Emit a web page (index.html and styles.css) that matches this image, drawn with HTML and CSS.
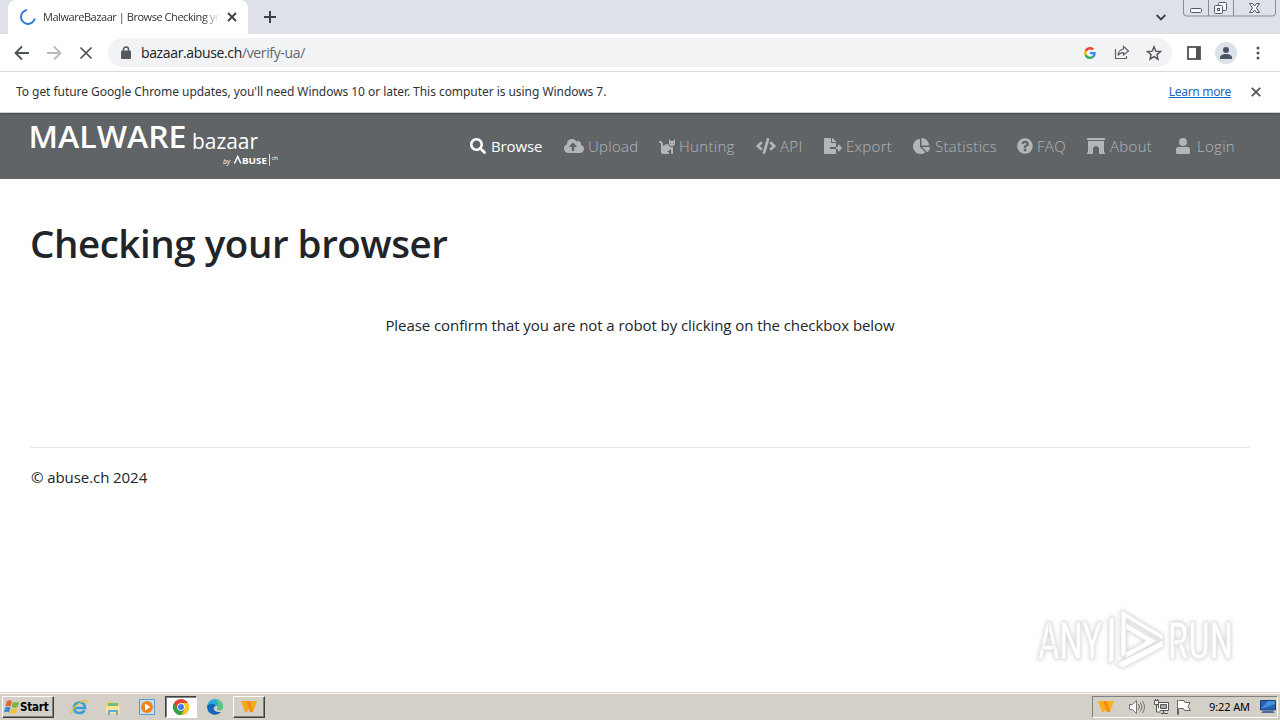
FILE: index.html
```
<!DOCTYPE html>
<html lang="en">
<head>
    <meta charset="UTF-8">
    <meta name="viewport" content="width=device-width, initial-scale=1.0">
    <title>MalwareBazaar | Browse Checking your browser</title>
    <link rel="stylesheet" href="styles.css">
</head>
<body>
    <div class="tabstrip">
        <div class="tab">
            <svg class="spinner" width="18" height="18" viewBox="0 0 18 18"><path d="M8 2A7 7 0 1 0 15.8 10.5" fill="none" stroke="#3b78d0" stroke-width="2"/></svg>
            <span class="tab-title">MalwareBazaar | Browse Checking your</span>
            <svg width="10" height="10" viewBox="0 0 10 10"><path d="M1 1l8 8M9 1L1 9" stroke="#3c4043" stroke-width="1.8"/></svg>
        </div>
        <svg class="new-tab" width="12" height="12" viewBox="0 0 12 12"><path d="M6 0v12M0 6h12" stroke="#3c4043" stroke-width="2"/></svg>
        <svg class="tab-search" width="10" height="7" viewBox="0 0 10 7"><path d="M.7 1L5 5.3 9.3 1" fill="none" stroke="#3c4043" stroke-width="1.9"/></svg>
        <svg class="controls" width="94" height="18" viewBox="0 0 94 18">
            <path d="M.5 0v13q0 3 3 3h86q3 0 3-3V0M25.500 0v16M50.500 0v16" fill="none" stroke="#868b95"/>
            <g fill="#f4f5f8" stroke="#555b66">
                <rect x="7.500" y="8.500" width="11" height="4" rx="1"/>
                <rect x="35.500" y="2.500" width="8" height="8" rx="1"/>
                <rect x="31.500" y="5.500" width="8" height="8" rx="1"/>
                <rect x="34.500" y="8.500" width="2" height="2"/>
                <path d="M66.500 3.500h3l2 2.500 2-2.500h3l-3 4.500 3 4.500h-3l-2-2.500-2 2.500h-3l3-4.500z"/>
            </g>
        </svg>
    </div>
    <div class="toolbar">
        <svg width="16" height="16" viewBox="0 0 16 16"><path d="M15 8H2M8 1.500L1.500 8 8 14.500" fill="none" stroke="#4f5357" stroke-width="1.800"/></svg>
        <svg width="16" height="16" viewBox="0 0 16 16"><path d="M1 8h13M8 1.500L14.500 8 8 14.500" fill="none" stroke="#b8babd" stroke-width="1.800"/></svg>
        <svg width="16" height="16" viewBox="0 0 16 16"><path d="M2.500 2.500l11 11M13.500 2.500l-11 11" stroke="#4f5357" stroke-width="1.700"/></svg>
        <div class="omnibox">
            <svg width="10" height="13" viewBox="0 0 10 13"><rect y="4.500" width="10" height="8.500" rx="1" fill="#55595d"/><path d="M2.500 5V3.500a2.500 2.500 0 0 1 5 0V5" fill="none" stroke="#55595d" stroke-width="1.500"/></svg>
            <span class="url">bazaar.abuse.ch<span class="path">/verify-ua/</span></span>
            <svg class="google" width="12" height="12" viewBox="0 0 48 48"><path fill="#ea4335" d="M24 9.500c3.540 0 6.710 1.220 9.210 3.600l6.850-6.850C35.900 2.380 30.470 0 24 0 14.620 0 6.510 5.380 2.560 13.220l7.980 6.190C12.430 13.720 17.740 9.500 24 9.500z"/><path fill="#4285f4" d="M46.980 24.550c0-1.570-.15-3.090-.38-4.550H24v9.020h12.940c-.58 2.960-2.260 5.480-4.780 7.180l7.730 6c4.510-4.180 7.090-10.360 7.090-17.650z"/><path fill="#fbbc05" d="M10.530 28.590A14.500 14.500 0 0 1 9.770 24c0-1.600.27-3.140.76-4.590l-7.980-6.190A23.900 23.900 0 0 0 0 24c0 3.880.92 7.540 2.560 10.780z"/><path fill="#34a853" d="M24 48c6.480 0 11.930-2.130 15.890-5.810l-7.730-6C30 37.640 27.240 38.490 24 38.490c-6.260 0-11.570-4.220-13.470-9.910l-7.980 6.190C6.510 42.620 14.620 48 24 48z"/></svg>
            <svg width="16" height="15" viewBox="0 0 16 15"><path d="M1.500 4v9.500h11V11M9.500 1.500L14.500 6l-5 4V7.600C7 7.500 5.300 8.500 4 10.500 4.300 7 6.300 4.500 9.500 4z" fill="none" stroke="#5f6368" stroke-width="1.200"/></svg>
            <svg width="16" height="16" viewBox="0 0 16 16"><path d="M8 1.800l1.800 4.400 4.700.4-3.600 3 1.100 4.600-4-2.500-4 2.500 1.100-4.600-3.600-3 4.700-.4z" fill="none" stroke="#4f5357" stroke-width="1.400"/></svg>
        </div>
        <svg class="panel" width="14" height="14" viewBox="0 0 14 14"><rect x="1" y="1" width="12" height="12" fill="#fff" stroke="#4f5357" stroke-width="1.800"/><path d="M9 1h4v12H9z" fill="#4f5357"/></svg>
        <svg class="avatar" width="22" height="22" viewBox="0 0 22 22"><circle cx="11" cy="11" r="11" fill="#dde1e8"/><circle cx="11" cy="8" r="3" fill="#4a5468"/><path d="M5 17v-1.500c0-2 3-3.500 6-3.500s6 1.500 6 3.500V17z" fill="#4a5468"/></svg>
        <svg class="dots" width="4" height="14" viewBox="0 0 4 14" fill="#4f5357"><circle cx="2" cy="2" r="1.500"/><circle cx="2" cy="7" r="1.500"/><circle cx="2" cy="12" r="1.500"/></svg>
    </div>
    <div class="infobar">
        <span class="notice">To get future Google Chrome updates, you'll need Windows 10 or later. This computer is using Windows 7.</span>
        <a class="learn" href="#">Learn more</a>
        <svg width="10" height="10" viewBox="0 0 10 10"><path d="M.8.8l8.400 8.400M9.200.8L.8 9.200" stroke="#55595d" stroke-width="1.900"/></svg>
    </div>

    <header class="navbar">
        <a class="brand" href="#">
            <svg width="252" height="46" viewBox="0 0 252 46" fill="#fff">
                <text class="brand-malware" x="-1.500" y="25" textLength="158" lengthAdjust="spacingAndGlyphs">MALWARE</text>
                <text class="brand-bazaar" x="162" y="25.500" textLength="66" lengthAdjust="spacingAndGlyphs">bazaar</text>
                <text class="brand-by" x="193" y="41">by</text>
                <path d="M204.500 40.500l3.200-7 3.200 7" fill="none" stroke="#fff" stroke-width="1.500"/>
                <text class="brand-abuse" x="212" y="40.500" textLength="25" lengthAdjust="spacingAndGlyphs">BUSE</text>
                <path d="M239 31h.8v12h-.8z"/>
                <text class="brand-ch" x="241.500" y="37">ch</text>
            </svg>
        </a>
        <nav>
            <a class="active i-browse" href="#"><svg width="16" height="16" viewBox="0 0 512 512"><path d="M505 442.700L405.300 343c-4.500-4.500-10.600-7-17-7H372c27.600-35.300 44-79.700 44-128C416 93.100 322.900 0 208 0S0 93.100 0 208s93.100 208 208 208c48.300 0 92.700-16.400 128-44v16.300c0 6.400 2.500 12.500 7 17l99.700 99.700c9.400 9.400 24.600 9.400 33.900 0l28.300-28.300c9.400-9.400 9.400-24.600.1-34zM208 336c-70.700 0-128-57.200-128-128 0-70.700 57.200-128 128-128 70.700 0 128 57.200 128 128 0 70.700-57.200 128-128 128z"/></svg><span>Browse</span></a>
            <a class="i-upload" href="#"><svg width="20" height="16" viewBox="0 0 640 512"><path d="M537.600 226.600c4.100-10.700 6.400-22.400 6.400-34.600 0-53-43-96-96-96-19.700 0-38.100 6-53.300 16.200C367 64.200 315.300 32 256 32c-88.400 0-160 71.600-160 160 0 2.700.1 5.400.2 8.100C40.200 219.800 0 273.200 0 336c0 79.500 64.500 144 144 144h368c70.700 0 128-57.300 128-128 0-61.900-44-113.600-102.400-125.400zM393.400 288H328v112c0 8.800-7.200 16-16 16h-48c-8.800 0-16-7.200-16-16V288h-65.400c-14.300 0-21.400-17.200-11.300-27.300l105.400-105.400c6.200-6.200 16.400-6.200 22.600 0l105.400 105.400c10.100 10.100 2.900 27.300-11.300 27.300z"/></svg><span>Upload</span></a>
            <a class="i-hunting" href="#"><svg width="16" height="16" viewBox="0 0 512 512"><path d="M290.600 192c-20.200 0-106.800 2-162.600 86V192c0-53-43-96-96-96-17.700 0-32 14.300-32 32s14.300 32 32 32 32 14.400 32 32v256c0 35.300 28.700 64 64 64h176c8.800 0 16-7.200 16-16v-16c0-17.700-14.300-32-32-32h-32l128-96v144c0 8.800 7.200 16 16 16h32c8.800 0 16-7.200 16-16V289.900c-10.300 2.700-20.900 4.500-32 4.500-61.800 0-113.500-44-125.400-102.400zM448 96h-64l-64-64v134.400c0 53 43 96 96 96s96-43 96-96V32zm-72 80a16 16 0 1 1 0-32 16 16 0 0 1 0 32zm80 0a16 16 0 1 1 0-32 16 16 0 0 1 0 32z"/></svg><span>Hunting</span></a>
            <a class="i-api" href="#"><svg width="20" height="16" viewBox="0 0 640 512"><path d="M278.900 511.500l-61-17.700c-6.400-1.800-10-8.500-8.200-14.900L346.200 8.700c1.800-6.400 8.500-10 14.900-8.200l61 17.700c6.400 1.800 10 8.500 8.200 14.900L293.800 503.300c-1.900 6.400-8.500 10.100-14.900 8.200zm-114-112.200l43.500-46.400c4.600-4.900 4.300-12.700-.8-17.200L117 256l90.600-79.700c5.100-4.500 5.500-12.300.8-17.200l-43.500-46.400c-4.500-4.800-12.100-5.100-17-.5L3.800 247.200c-5.100 4.700-5.100 12.800 0 17.500l144.100 135.100c4.900 4.600 12.500 4.400 17-.5zm327.200.6l144.100-135.100c5.100-4.700 5.100-12.800 0-17.500L492.100 112.100c-4.800-4.500-12.400-4.300-17 .5L431.600 159c-4.600 4.900-4.300 12.700.8 17.200L523 256l-90.600 79.700c-5.100 4.500-5.500 12.300-.8 17.200l43.500 46.400c4.500 4.900 12.100 5.100 17 .6z"/></svg><span>API</span></a>
            <a class="i-export" href="#"><svg width="18" height="16" viewBox="0 0 576 512"><path d="M384 121.900c0-6.300-2.500-12.400-7-16.900L279.100 7c-4.500-4.500-10.600-7-17-7H256v128h128zM571 308l-95.700-96.400c-10.100-10.100-27.400-3-27.400 11.300V288h-64v64h64v65.200c0 14.300 17.300 21.400 27.400 11.300L571 332c6.600-6.600 6.600-17.400 0-24zm-379 28v-32c0-8.800 7.200-16 16-16h176V160H248c-13.200 0-24-10.800-24-24V0H24C10.700 0 0 10.700 0 24v464c0 13.300 10.700 24 24 24h336c13.300 0 24-10.700 24-24V352H208c-8.800 0-16-7.200-16-16z"/></svg><span>Export</span></a>
            <a class="i-statistics" href="#"><svg width="17" height="16" viewBox="0 0 544 512"><path d="M527.800 288H290.500l158 158c6 6 16 6.500 22.200.7 38.700-36.500 65.300-85.600 73.100-140.900 1.400-9.400-6.400-17.800-16-17.800zM512 223.200C503.700 103.700 408.300 8.300 288.800 0 279.700-.6 272 7.100 272 16.200V240h223.800c9.100 0 16.800-7.700 16.200-16.800zM224 288V50.700c0-9.500-8.400-17.400-17.800-16C87 51.500-4.100 155.600.1 280.400 4.500 408.500 114.800 513.600 243 512c50.400-.6 97-16.900 135.300-44 7.900-5.600 8.400-17.200 1.600-24.100z"/></svg><span>Statistics</span></a>
            <a class="i-faq" href="#"><svg width="16" height="16" viewBox="0 0 512 512"><path d="M504 256c0 137-111 248-248 248S8 393 8 256C8 119 119 8 256 8s248 111 248 248zM262.700 90c-54.500 0-89.300 23-116.600 63.800-3.500 5.300-2.400 12.400 2.700 16.200l34.700 26.300c5.200 4 12.600 3 16.700-2.100 17.900-22.700 30.100-35.800 57.300-35.800 20.400 0 45.700 13.100 45.700 33 0 15-12.400 22.700-32.500 34C247.100 238.500 216 255 216 296v4c0 6.600 5.400 12 12 12h56c6.600 0 12-5.400 12-12v-1.300c0-28.500 83.200-29.700 83.200-106.700 0-58-60.200-102-116.500-102zM256 338a46 46 0 1 0 0 92 46 46 0 0 0 0-92z"/></svg><span>FAQ</span></a>
            <a class="i-about" href="#"><svg width="18" height="16" viewBox="0 0 576 512"><path d="M16 0h544q16 0 16 16v32q0 16-16 16H16Q0 64 0 48V16Q0 0 16 0zM32 96h512v368h16q16 0 16 16v32H384V352c0-53-43-96-96-96s-96 43-96 96v160H0v-32q0-16 16-16h16z"/></svg><span>About</span></a>
            <a class="i-login" href="#"><svg width="14" height="16" viewBox="0 0 448 512"><path d="M224 256a128 128 0 1 0 0-256 128 128 0 0 0 0 256zM64 288h320q64 0 64 80v96q0 48-48 48H48q-48 0-48-48v-96q0-80 64-80z"/></svg><span>Login</span></a>
        </nav>
    </header>

    <main>
        <h1>Checking your browser</h1>
        <p class="confirm">Please confirm that you are not a robot by clicking on the checkbox below</p>
        <hr>
        <footer>© abuse.ch 2024</footer>
        <svg class="watermark" width="220" height="84" viewBox="0 0 220 84">
            <g fill="#fff" stroke="#e6e6e6" stroke-width="1">
                <text x="8" y="60" textLength="64" lengthAdjust="spacingAndGlyphs">ANY</text>
                <text x="138" y="60" textLength="65" lengthAdjust="spacingAndGlyphs">RUN</text>
                <path d="M79 20l5-3v44l-5 4zM91 11l42 25v5L96 19v38h-5zM92 62l41-21v7L93 69l-7-4z"/>
                <path d="M96 24l31 18-31 17v-6l20-11-20-12z"/>
            </g>
        </svg>
    </main>

    <div class="taskbar">
        <div class="start">
            <svg width="16" height="16" viewBox="0 0 16 16"><path d="M3 2q3-1.500 5 .2L6.700 7.500q-2-1.500-5.200-.2z" fill="#e8622a"/><path d="M9 2.800q3 1.500 6 0L13.700 8q-3 1.500-6 0z" fill="#74b843"/><path d="M1.200 8.500q3-1.500 5.200.2L5 13.500q-2-1.500-5 0z" fill="#3c8bd0"/><path d="M7.300 9.200q3 1.500 6 0L12 14q-3 1.500-6 0z" fill="#f5c22f"/></svg>
            <span>Start</span>
        </div>
        <div class="task ie"><svg width="18" height="18" viewBox="0 0 18 18"><path d="M4 10h11q0-5.500-5.500-5.500T4 10q0 5 5.500 5 3.500 0 5-2.700" fill="none" stroke="#35a0dc" stroke-width="2.600"/><path d="M2 16C-1 13 12 1 16.500 2.500q1 1-.5 3" fill="none" stroke="#e9bd3c" stroke-width="1.300"/></svg></div>
        <div class="task"><svg width="18" height="18" viewBox="0 0 18 18"><path d="M2 3h6l1 2h7v11H2z" fill="#e9cf77"/><path d="M4 5h10v4H4z" fill="#75bd75"/><path d="M2 8h14v8H2z" fill="#f5e39c"/><path d="M4 17v-5h10v5h-2v-3H6v3z" fill="#62aed6"/></svg></div>
        <div class="task"><svg width="18" height="18" viewBox="0 0 18 18"><path d="M1.500 1.500h15v15h-15z" fill="#c9e0f3" stroke="#5a9cd0"/><circle cx="9" cy="9" r="6" fill="#ee8220"/><path d="M7 5.500L12.500 9 7 12.500z" fill="#fff"/></svg></div>
        <div class="task pressed"><svg width="16" height="16" viewBox="0 0 16 16"><circle cx="8" cy="8" r="8" fill="#e24436"/><path d="M15 4A8 8 0 0 1 8 16L11.500 10 8 4z" fill="#f8c822"/><path d="M1.100 4l3.400 6A4 4 0 0 0 11.500 10L8 16A8 8 0 0 1 1.100 4z" fill="#2fa04e"/><circle cx="8" cy="8" r="3.800" fill="#fff"/><circle cx="8" cy="8" r="3" fill="#3b7ee8"/></svg></div>
        <div class="task"><svg width="16" height="16" viewBox="0 0 16 16"><path d="M0 8a8 8 0 0 1 16 0c0 3-4 4-6 2.500C12 8 9 5 6 6S1 9 0 8z" fill="#2fa9d8"/><path d="M9 0a8 8 0 0 1 7 8c0 3-4 4-6 2.500C12 8 12 4 9 0z" fill="#5ccb70"/><path d="M0 8C1 4 8 4 9 7c-4 1-3 7 5 6A8 8 0 0 1 0 8z" fill="#1667b5"/></svg></div>
        <div class="task raised"><svg width="16" height="14" viewBox="0 0 16 14"><path d="M0 1h5l2 3 2-3h7l-4 11H9L7.500 9 6 12H4z" fill="#f6a81c"/><path d="M5 1l4 11h3L9 1z" fill="#fa8b14"/></svg></div>
        <div class="tray">
            <svg class="tray-w" width="16" height="14" viewBox="0 0 16 14"><path d="M0 1h5l2 3 2-3h7l-4 11H9L7.500 9 6 12H4z" fill="#f8b11e"/><path d="M5 1l4 11h3L9 1z" fill="#fa8b14"/></svg>
            <svg width="17" height="16" viewBox="0 0 17 16" fill="none" stroke="#777"><path d="M1.500 5.500h3l4-4v13l-4-4h-3z" fill="#fff"/><path d="M10.500 5q2 3 0 6M12.500 3.500q3 4.500 0 9M14.500 2q4 6 0 12"/></svg>
            <svg width="17" height="16" viewBox="0 0 17 16" stroke="#555"><path d="M5.500 3.500h10v8h-10z" fill="#fff"/><path d="M7.500 5.500h6v4h-6z" fill="#aaa"/><path d="M1.500 1.500h4v4h-4zM2.500 0v2M4.500 0v2M3.500 6v7h4M8 14.500h7M10.500 12v2" fill="#fff"/></svg>
            <svg class="flag" width="16" height="16" viewBox="0 0 16 16"><path d="M1.500 1v14.500h1V9.500h5l1 2h6l-2.500-4 2-4h-5l-1-2h-5.500" fill="#fff" stroke="#666"/></svg>
            <span class="clock">9:22 AM</span>
            <svg width="16" height="14" viewBox="0 0 16 14"><path d="M.5.5h15v9.500H.5z" fill="#2563b5" stroke="#174480"/><path d="M1 9L8 1h7v3z" fill="#4b91da"/><path d="M3 11h10l2 2H1z" fill="#496c99"/></svg>
        </div>
    </div>
</body>
</html>
```
FILE: styles.css
```
*{
    box-sizing: border-box;
    padding: 0px;
    margin: 0px;
}

body{
    display: flex;
    flex-direction: column;
    width: 1280px;
    height: 720px;
    overflow: hidden;
    background-color: #fff;
    color: #212529;
    font-family: "Noto Sans", "Open Sans", sans-serif;
    font-size: 12px;
}

svg{
    flex: none;
    display: block;
}

a{
    color: inherit;
    text-decoration: none;
}

span, a, h1, p{
    white-space: nowrap;
}

.tabstrip{
    display: flex;
    height: 34px;
    background-color: #dee1e8;
    padding-left: 8px;
}

.tab{
    display: flex;
    align-items: center;
    width: 240px;
    height: 34px;
    padding: 0 11px;
    border-radius: 8px 8px 0 0;
    background-color: #fff;
}

.tab-title{
    width: 175px;
    margin: -1px 9px 0 6px;
    overflow: hidden;
    font-family: "Open Sans", sans-serif;
    font-size: 11px;
    letter-spacing: -0.45px;
    color: #303336;
    mask-image: linear-gradient(to right, #000 160px, transparent 177px);
}

.new-tab{
    margin: 11px 0 0 16px;
}

.tab-search{
    margin: 14px 17px 0 auto;
}

.controls{
    margin-right: 3px;
}

.toolbar{
    display: flex;
    align-items: center;
    height: 38px;
    padding-left: 14px;
    gap: 16px;
    border-bottom: 1px solid #dadce0;
}

.omnibox{
    display: flex;
    align-items: center;
    width: 1064px;
    height: 29px;
    margin-left: -2px;
    padding: 0 10px 0 13px;
    border-radius: 15px;
    background-color: #f1f3f4;
    gap: 16px;
}

.url{
    margin-left: -6px;
    font-family: "Open Sans", sans-serif;
    font-size: 14px;
    letter-spacing: -0.36px;
    color: #202124;
}

.path{
    color: #63676b;
}

.google{
    margin: 0 2px 0 auto;
}

.panel{
    margin-left: -1px;
}

.avatar{
    margin-left: -2px;
}

.dots{
    margin-left: 3px;
}

.infobar{
    display: flex;
    align-items: center;
    height: 41px;
    padding: 0 19px 0 16px;
    border-bottom: 1px solid #d0d2d4;
    color: #303336;
}

.notice{
    margin-top: -2px;
    letter-spacing: -0.05px;
}

.learn{
    margin: -2px 20px 0 auto;
    color: #1967c0;
    text-decoration: underline;
    letter-spacing: -0.3px;
}

.navbar{
    display: flex;
    align-items: center;
    height: 66px;
    padding-left: 30px;
    background-color: #606467;
    box-shadow: inset 0 2px 2px -1px #484b4e;
}

.brand{
    width: 440px;
    font-family: "Open Sans", sans-serif;
}

.brand svg{
    overflow: visible;
}

.brand-malware{
    font: 600 31px "Open Sans", sans-serif;
}

.brand-bazaar{
    font: 400 22px "Open Sans", sans-serif;
}

.brand-by{
    font: italic 7px "Open Sans", sans-serif;
}

.brand-abuse{
    font: 700 9.5px "Open Sans", sans-serif;
}

.brand-ch{
    font: 6px "Open Sans", sans-serif;
}

nav{
    display: grid;
    grid-template-columns: 94px 95px 97px 68px 89px 104px 70px 89px 70px;
    font-family: "Open Sans", sans-serif;
    font-size: 15px;
    font-weight: 300;
    letter-spacing: 0.3px;
    color: #b3b6b8;
}

nav a{
    display: flex;
    align-items: center;
    gap: 4px;
}

nav svg{
    fill: currentColor;
}

nav .active{
    color: #fff;
    font-weight: 400;
    letter-spacing: -0.1px;
    gap: 5px;
}

.i-statistics, .i-about{
    gap: 5px;
}

.i-login{
    gap: 7px;
}

main{
    position: relative;
    flex: 1;
    padding: 38px 30px 0;
    font-family: "Open Sans", sans-serif;
    font-size: 15px;
    letter-spacing: -0.07px;
}

h1{
    font-size: 38.5px;
    font-weight: 600;
    line-height: 52px;
    letter-spacing: -0.45px;
}

.confirm{
    margin-top: 44px;
    line-height: 24px;
    text-align: center;
}

hr{
    margin-top: 110px;
    border: none;
    border-top: 1px solid #e2e2e3;
}

footer{
    margin-top: 17px;
    padding-left: 1px;
    line-height: 24px;
}

.watermark{
    position: absolute;
    left: 1030px;
    top: 420px;
    overflow: visible;
    letter-spacing: 0;
    filter: drop-shadow(0 0 2px #ccc);
}

.watermark text{
    font: 500 52px Roboto, sans-serif;
}

.taskbar{
    display: flex;
    align-items: center;
    height: 28px;
    padding: 0 2px;
    background-color: #d4d0c8;
    border-top: 1px solid #d4d0c8;
    box-shadow: inset 0 1px #fff;
}

.start{
    display: flex;
    align-items: center;
    width: 52px;
    height: 22px;
    padding-left: 1px;
    border: 1px solid;
    border-color: #fff #404040 #404040 #fff;
    box-shadow: inset -1px -1px #808080;
    font: 700 11.5px "DejaVu Sans Condensed", "Noto Sans", sans-serif;
    letter-spacing: -0.2px;
    color: #000;
}

.task{
    display: flex;
    align-items: center;
    justify-content: center;
    width: 32px;
    height: 22px;
    margin-right: 2px;
}

.ie{
    margin-left: 9px;
}

.pressed{
    background-color: #fff;
    border: 1px solid;
    border-color: #404040 #fff #fff #404040;
    box-shadow: inset 1px 1px #808080;
}

.raised{
    border: 1px solid;
    border-color: #fff #404040 #404040 #fff;
    box-shadow: inset -1px -1px #808080;
}

.tray{
    display: flex;
    align-items: center;
    width: 186px;
    height: 22px;
    margin-left: auto;
    padding-left: 5px;
    gap: 8px;
    border: 1px solid;
    border-color: #808080 #fff #fff #808080;
}

.tray-w{
    margin-right: 6px;
}

.flag{
    margin-left: -2px;
}

.clock{
    margin: -1px 2px 0 9px;
    font-size: 11px;
    letter-spacing: -0.1px;
    color: #000;
}
```
